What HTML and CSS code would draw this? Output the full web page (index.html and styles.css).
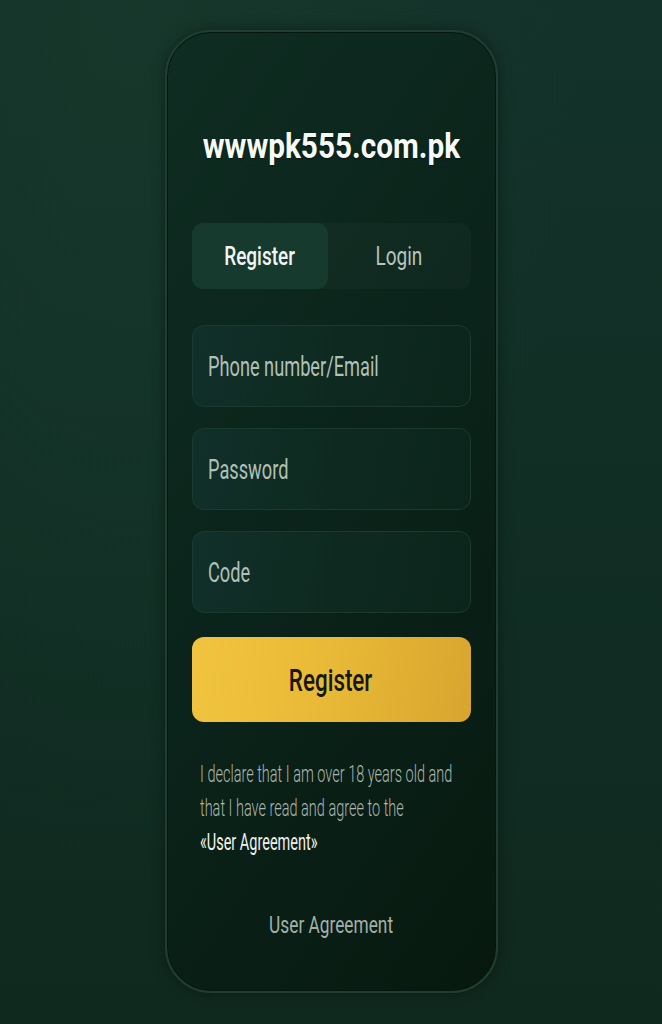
FILE: index.html
```html
<!DOCTYPE html>
<html lang="en">
<head>
<meta charset="utf-8">
<title>wwwpk555.com.pk</title>
<link rel="stylesheet" href="styles.css">
</head>
<body>
<div class="page">
  <main class="card">
    <h1 class="title"><span>wwwpk555.com.pk</span></h1>
    <div class="tabs">
      <div class="tab active"><span>Register</span></div>
      <div class="tab"><span>Login</span></div>
    </div>
    <div class="fields">
      <div class="field"><span class="ph">Phone number/Email</span></div>
      <div class="field"><span class="ph">Password</span></div>
      <div class="field"><span class="ph">Code</span></div>
    </div>
    <button class="submit" type="button"><span>Register</span></button>
    <p class="declare">I declare that I am over 18 years old and<br>that I have read and agree to the<br><span class="link">«User Agreement»</span></p>
    <div class="footer"><span>User Agreement</span></div>
  </main>
</div>
</body>
</html>
```
FILE: styles.css
```css
* { box-sizing: border-box; }
html, body { margin: 0; padding: 0; }
body {
  width: 662px;
  height: 1024px;
  overflow: hidden;
  font-family: Roboto, "Liberation Sans", sans-serif;
  background:
    radial-gradient(ellipse at 20% 0%, #17372b 0%, rgba(23,55,43,0) 60%),
    linear-gradient(180deg, #13322a 0%, #112e24 50%, #10291f 100%);
}
.page {
  display: flex;
  justify-content: center;
  padding-top: 30px;
}
.card {
  width: 333px;
  height: 963px;
  border-radius: 46px;
  border: 2px solid #1f3e31;
  box-shadow: inset 0 0 0 1px #061610, 0 0 14px rgba(0,0,0,0.35);
  background: linear-gradient(125deg, #0f2d22 0%, #0b241b 45%, #07190f 100%);
  padding: 95px 25px 0;
  display: flex;
  flex-direction: column;
}
.title {
  margin: 0;
  height: 40px;
  line-height: 40px;
  font-size: 35px;
  font-weight: 700;
  color: #f7f9f7;
  display: flex;
  justify-content: center;
  white-space: nowrap;
  text-shadow: 0 1px 2px rgba(0,0,0,0.5);
}
.title span {
  display: inline-block;
  flex: none;
  transform: scaleX(0.85);
  transform-origin: center;
}
.tabs {
  margin-top: 56px;
  height: 66px;
  display: grid;
  grid-template-columns: 136px 1fr;
  background: rgba(255,255,255,0.025);
  border-radius: 11px;
}
.tab {
  display: flex;
  align-items: center;
  justify-content: center;
  font-size: 25px;
  font-weight: 400;
  color: #b6c4bd;
  border-radius: 11px;
}
.tab span {
  display: inline-block;
  transform: scaleX(0.76);
}
.tab.active {
  background: #163a2d;
  color: #f1f5f2;
  font-weight: 500;
}
.fields {
  margin-top: 36px;
  display: flex;
  flex-direction: column;
  gap: 21px;
}
.field {
  height: 82px;
  border-radius: 12px;
  border: 1px solid #1b3a2d;
  background: linear-gradient(100deg, #11302a 0%, #0e2a20 50%, #0c251c 100%);
  display: flex;
  align-items: center;
  padding-left: 15px;
  white-space: nowrap;
}
.ph {
  display: inline-block;
  font-size: 28px;
  color: #b1c0b8;
  transform: scaleX(0.65);
  transform-origin: left center;
}
.submit {
  margin-top: 24px;
  height: 85px;
  width: 100%;
  border: 0;
  border-radius: 12px;
  background: linear-gradient(100deg, #f1c43f 0%, #e8b936 50%, #d8a52f 100%);
  font-family: Roboto, "Liberation Sans", sans-serif;
  font-size: 32px;
  font-weight: 500;
  color: #16170d;
  display: flex;
  align-items: center;
  justify-content: center;
  padding: 0;
}
.submit span {
  display: inline-block;
  transform: scaleX(0.7);
}
.declare {
  margin: 36px 0 0 8px;
  font-size: 23px;
  font-weight: 300;
  line-height: 34px;
  color: #aab6af;
  white-space: nowrap;
  transform: scaleX(0.63);
  transform-origin: left top;
}
.link { color: #eef2ef; font-weight: 400; }
.footer {
  margin-top: 50px;
  height: 30px;
  line-height: 30px;
  font-size: 24px;
  color: #a2b1a9;
  text-align: center;
  white-space: nowrap;
}
.footer span {
  display: inline-block;
  transform: scaleX(0.72);
}
```
